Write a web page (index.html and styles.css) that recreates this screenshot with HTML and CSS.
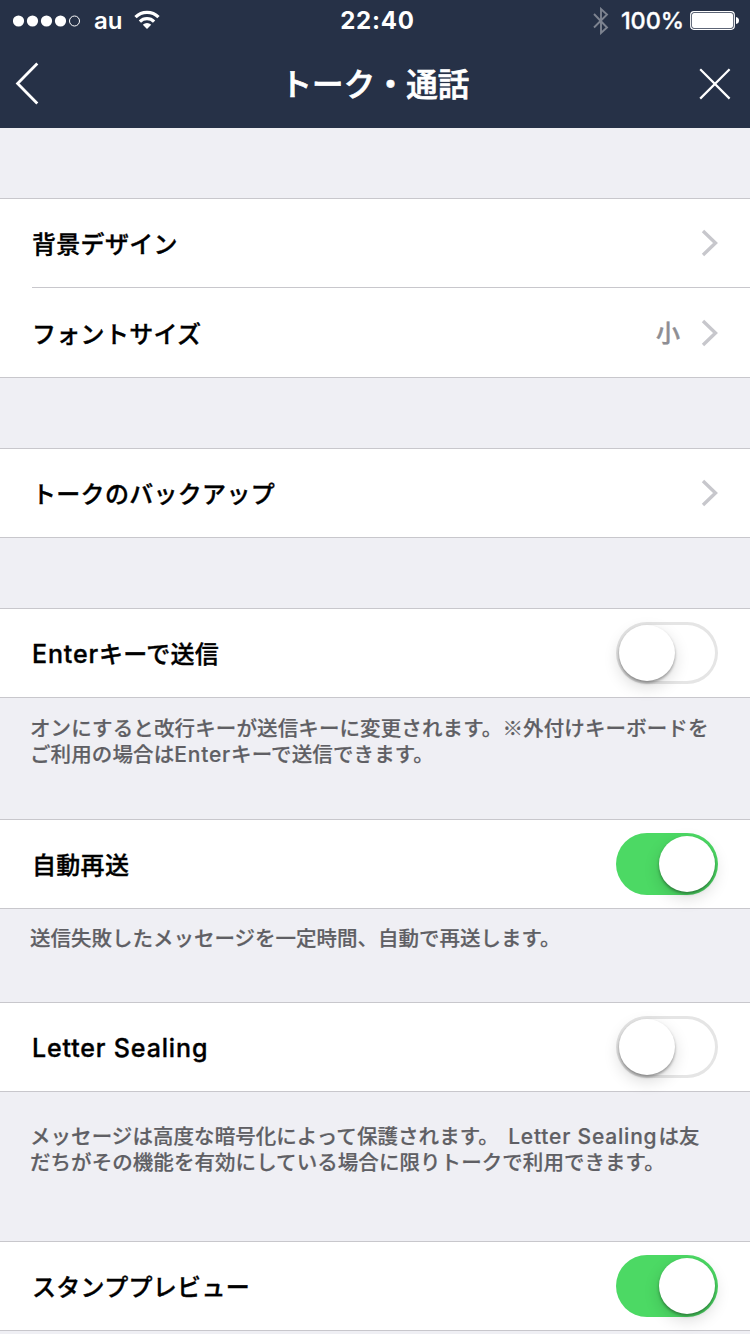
FILE: index.html
```html
<!DOCTYPE html>
<html lang="ja">
<head>
    <meta charset="UTF-8">
    <meta name="viewport" content="width=device-width, initial-scale=1.0">
    <title>トーク・通話</title>
    <link rel="stylesheet" href="styles.css">
</head>
<body>
    <header>
        <div class="status-bar">
            <div class="status-left">
                <svg class="signal" width="67" height="12" viewBox="0 0 67 12">
                    <g fill="#fff">
                        <circle cx="5.5" cy="6" r="5.6"/>
                        <circle cx="19.5" cy="6" r="5.6"/>
                        <circle cx="33.5" cy="6" r="5.6"/>
                        <circle cx="47.5" cy="6" r="5.6"/>
                    </g>
                    <circle cx="61.5" cy="6" r="5" fill="none" stroke="#fff" stroke-width="1"/>
                </svg>
                <span class="carrier">au</span>
                <svg class="wifi" width="26" height="20" viewBox="0 0 26 20">
                    <g fill="none" stroke="#fff" stroke-width="3.2">
                        <path d="M1.5 7.2a16 16 0 0 1 23 0"/>
                        <path d="M5.9 11.6a10 10 0 0 1 14.2 0"/>
                    </g>
                    <path d="M13 19l-4.2-4.3a6 6 0 0 1 8.4 0z" fill="#fff"/>
                </svg>
            </div>
            <div class="clock">22:40</div>
            <div class="status-right">
                <svg class="bluetooth" width="16" height="28" viewBox="0 0 16 28">
                    <path d="M1 7l13 13.5L8 26V2l6 5.5L1 20.5" fill="none" stroke="#7d8390" stroke-width="1.9"/>
                </svg>
                <span class="percent">100%</span>
                <svg class="battery" width="50" height="20" viewBox="0 0 50 20">
                    <rect x="0.7" y="0.7" width="43.6" height="17.6" rx="3.2" fill="none" stroke="#fff" stroke-width="1.2"/>
                    <rect x="2" y="2" width="41" height="15" rx="2" fill="#fff"/>
                    <path d="M46 6q3 .5 3 3.5t-3 3.5z" fill="#fff"/>
                </svg>
            </div>
        </div>
        <nav class="nav-bar">
            <svg class="back" width="24" height="44" viewBox="0 0 24 44">
                <path d="M22.3 1.5L2.6 21.5l19.7 20" fill="none" stroke="#fff" stroke-width="2.8"/>
            </svg>
            <h1>トーク・通話</h1>
            <svg class="close" width="32" height="32" viewBox="0 0 32 32">
                <path d="M1.2 1.2l29.4 29.4M30.6 1.2L1.2 30.6" fill="none" stroke="#fff" stroke-width="2.2"/>
            </svg>
        </nav>
    </header>

    <main>
        <div class="group">
            <div class="row">
                <span class="label">背景デザイン</span>
                <svg class="arrow" width="18" height="28" viewBox="0 0 18 28">
                    <path d="M2 2l12.5 12L2 26" fill="none" stroke="#c7c7cc" stroke-width="3.4"/>
                </svg>
            </div>
            <div class="row">
                <span class="label">フォントサイズ</span>
                <span class="value">小</span>
                <svg class="arrow" width="18" height="28" viewBox="0 0 18 28">
                    <path d="M2 2l12.5 12L2 26" fill="none" stroke="#c7c7cc" stroke-width="3.4"/>
                </svg>
            </div>
        </div>

        <div class="group">
            <div class="row">
                <span class="label">トークのバックアップ</span>
                <svg class="arrow" width="18" height="28" viewBox="0 0 18 28">
                    <path d="M2 2l12.5 12L2 26" fill="none" stroke="#c7c7cc" stroke-width="3.4"/>
                </svg>
            </div>
        </div>

        <div class="group">
            <div class="row">
                <span class="label"><span class="latin">Enter</span>キーで送信</span>
                <span class="switch"></span>
            </div>
        </div>
        <p class="note note-enter">オンにすると改行キーが送信キーに変更されます。※外付けキーボードを<br>ご利用の場合は<span class="latin">Enter</span>キーで送信できます。</p>

        <div class="group">
            <div class="row">
                <span class="label">自動再送</span>
                <span class="switch on"></span>
            </div>
        </div>
        <p class="note note-resend">送信失敗したメッセージを一定時間、自動で再送します。</p>

        <div class="group">
            <div class="row">
                <span class="label"><span class="latin">Letter Sealing</span></span>
                <span class="switch"></span>
            </div>
        </div>
        <p class="note note-sealing">メッセージは高度な暗号化によって保護されます。<span class="latin"> Letter Sealing</span>は友<br>だちがその機能を有効にしている場合に限りトークで利用できます。</p>

        <div class="group">
            <div class="row">
                <span class="label">スタンププレビュー</span>
                <span class="switch on"></span>
            </div>
        </div>
    </main>
</body>
</html>
```
FILE: styles.css
```css
* {
    box-sizing: border-box;
}
body {
    font-family: 'Noto Sans CJK JP', sans-serif;
    font-weight: 500;
    margin: 0;
    height: 1334px;
    overflow: hidden;
    background-color: #efeff4;
    color: #000;
}
svg {
    display: block;
    flex: none;
}
.latin {
    font-family: Inter, sans-serif;
    line-height: 1;
}
header {
    height: 128px;
    background-color: #263147;
    color: #fff;
}
.status-bar {
    display: grid;
    grid-template-columns: 1fr auto 1fr;
    height: 40px;
    padding: 1px 10px 0 13px;
    align-items: center;
    font-family: Inter, sans-serif;
    font-size: 24px;
    line-height: 40px;
}
.status-left,
.status-right {
    display: flex;
    align-items: center;
}
.status-right {
    justify-content: flex-end;
}
.carrier {
    margin: 0 12px 0 14px;
    font-weight: 600;
}
.wifi {
    margin-bottom: 2px;
}
.clock {
    padding-left: 2px;
    font-weight: 700;
    letter-spacing: 0.8px;
}
.bluetooth {
    margin-bottom: 1px;
}
.percent {
    margin: 0 6px 0 12px;
    font-size: 23.5px;
    letter-spacing: -0.1px;
    -webkit-text-stroke: 0.3px;
}
.nav-bar {
    display: flex;
    height: 88px;
    padding: 0 19px 0 15px;
    align-items: center;
    justify-content: space-between;
}
.nav-bar h1 {
    margin: 0;
    padding: 0 0 4px 12px;
    font-size: 31.5px;
    font-weight: 500;
    line-height: 84px;
    letter-spacing: 0.1px;
    -webkit-text-stroke: 0.7px;
}
.group {
    margin-top: 70px;
    border-top: 1px solid #c8c7cc;
    border-bottom: 1px solid #c8c7cc;
    background-color: #fff;
}
.row {
    display: flex;
    height: 88px;
    padding-right: 32px;
    margin-left: 32px;
    align-items: center;
}
.row + .row {
    height: 90px;
    border-top: 1px solid #c8c7cc;
}
.label {
    flex: 1;
    font-size: 24px;
    line-height: 36px;
    letter-spacing: 0.3px;
    -webkit-text-stroke: 0.35px;
}
.label .latin {
    font-size: 25px;
    letter-spacing: 0.85px;
}
.value {
    margin-right: 21px;
    padding-bottom: 2px;
    font-size: 24px;
    color: #8e8e93;
    -webkit-text-stroke: 0.4px;
}
.arrow {
    margin-right: -1px;
}
.switch {
    width: 102px;
    height: 62px;
    padding: 3px;
    border-radius: 31px;
    box-shadow: inset 0 0 0 3px #e5e5e5;
}
.switch::before {
    content: "";
    display: block;
    width: 56px;
    height: 56px;
    border-radius: 50%;
    background-color: #fff;
    box-shadow: 0 6px 16px rgba(0,0,0,0.15), 0 2px 3px rgba(0,0,0,0.35);
}
.switch.on {
    background-color: #4cd964;
    box-shadow: none;
}
.switch.on::before {
    margin-left: auto;
}
.note {
    margin: 0;
    padding: 16px 30px 0;
    font-size: 20.5px;
    line-height: 26px;
    color: #5f5f64;
    white-space: nowrap;
    -webkit-text-stroke: 0.2px;
}
.note .latin {
    font-size: 21px;
    letter-spacing: 0.8px;
}
.note + .group {
    margin-top: 0;
}
.note-enter {
    height: 121px;
    letter-spacing: 0.12px;
}
.note-resend {
    height: 93px;
    padding-top: 15px;
}
.note-sealing {
    height: 149px;
    padding-top: 30px;
    letter-spacing: 0.06px;
}
.note-sealing .latin {
    margin: 0 1px 0 3px;
}
```
